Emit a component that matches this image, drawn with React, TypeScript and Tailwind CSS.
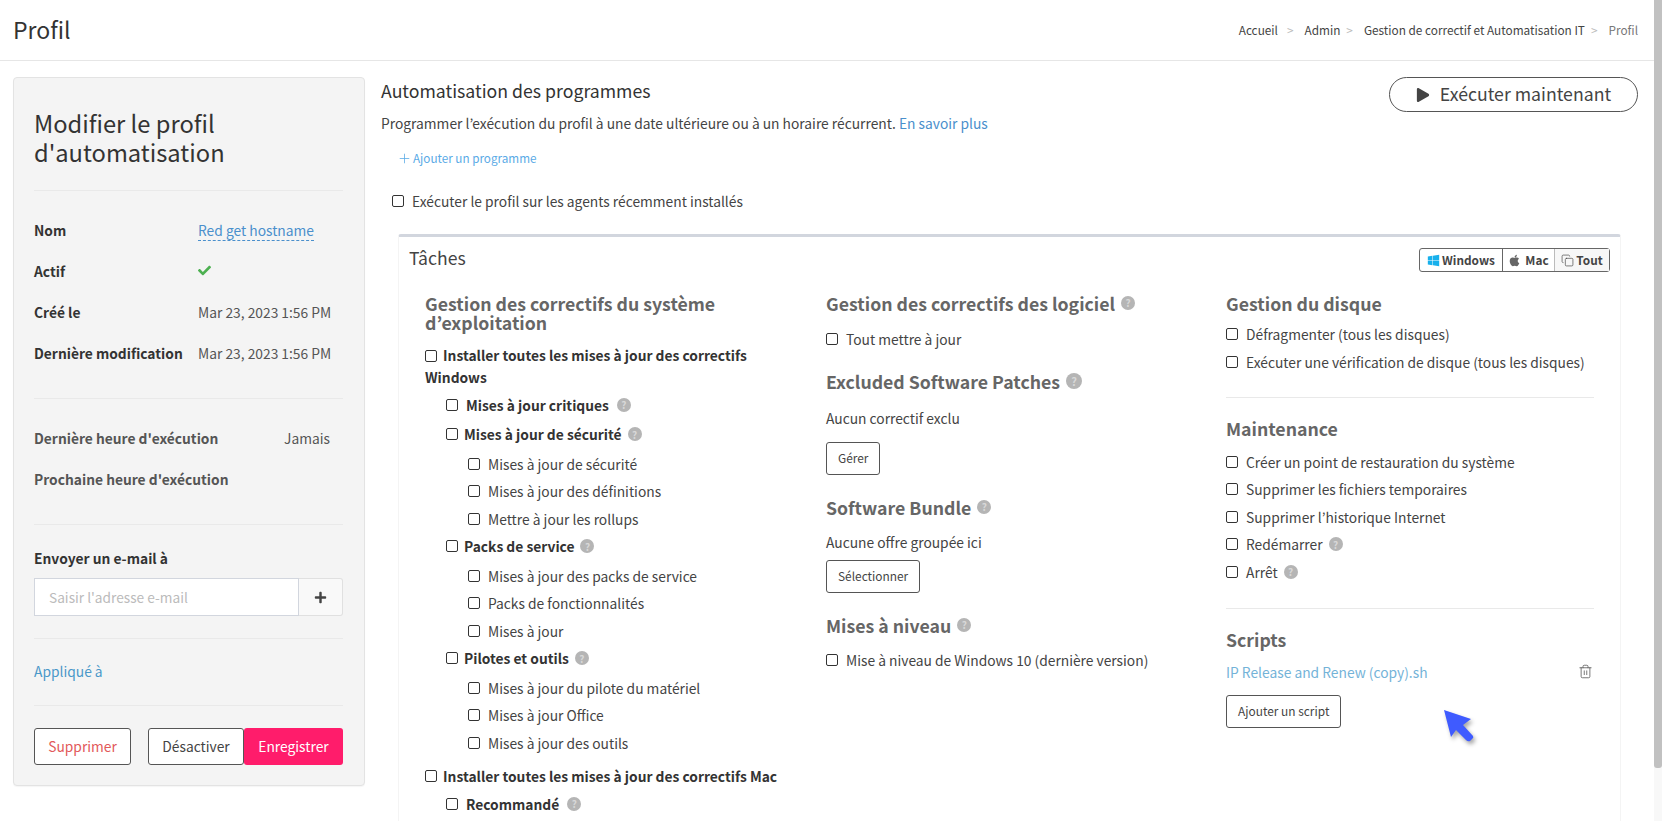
import { Copy, Plus, Trash2 } from 'lucide-react';
import { FaApple, FaCheck, FaPlay, FaPlus, FaWindows } from 'react-icons/fa';

function Help({ big, className = '' }: { big?: boolean; className?: string }) {
  return (
    <span
      className={`inline-flex shrink-0 items-center justify-center rounded-full bg-[#b5b5b5] font-bold text-[#d8d8d8] ${
        big ? 'h-[16px] w-[16px] text-[11px]' : 'h-[14px] w-[14px] text-[10px]'
      } ${className}`}
    >
      ?
    </span>
  );
}

function Box() {
  return <span className="inline-block h-[12px] w-[12px] shrink-0 rounded-[2px] border border-[#333] bg-white" />;
}

function Row({ label, bold, help, gap = 'gap-2', className = '' }: { label: string; bold?: boolean; help?: boolean; gap?: string; className?: string }) {
  return (
    <div className={`flex h-[27.5px] items-center ${gap} ${bold ? 'font-bold text-[#333]' : ''} ${className}`}>
      <Box />
      <span className="leading-5">{label}</span>
      {help ? <Help className={bold ? '' : '-ml-[2px]'} /> : null}
    </div>
  );
}

function Group({ label, items, gap }: { label: string; items: string[]; gap?: string }) {
  return (
    <div>
      <Row label={label} bold help gap={gap ?? 'gap-[6px]'} className="ml-[21px]" />
      <div className="mt-[2px] ml-[43px]">
        {items.map((item) => (
          <Row key={item} label={item} />
        ))}
      </div>
    </div>
  );
}

function Heading({ text, help, big, className = '' }: { text: string; help?: boolean; big?: boolean; className?: string }) {
  return (
    <h4 className={`flex h-5 items-center text-[17.7px] leading-5 font-bold text-[#666] ${className}`}>
      {text}
      {help ? <Help big={big} className="ml-[6px]" /> : null}
    </h4>
  );
}

function OutlineBtn({ label, className = '' }: { label: string; className?: string }) {
  return (
    <button type="button" className={`block h-[33px] rounded-[3px] border border-[#555] bg-white px-[11px] text-[11.9px] text-[#444] ${className}`}>
      {label}
    </button>
  );
}

function Info({ label, children, muted }: { label: string; children?: React.ReactNode; muted?: boolean }) {
  return (
    <div className={`flex h-[41px] items-center justify-between pr-[13px] leading-5 ${muted ? 'text-[#555]' : 'text-[#333]'}`}>
      <span className="font-bold">{label}</span>
      {children}
    </div>
  );
}

const HR = 'h-px bg-[#e9e9e9]';

export default function App() {
  return (
    <div className="flex h-[821px] overflow-hidden bg-white font-['Noto_Sans_CJK_JP','Liberation_Sans',sans-serif] text-[13.8px] text-[#444]">
      <div className="relative min-w-0 flex-1">
        <header className="flex h-[61px] items-center justify-between border-b border-[#e6e6e6] pr-4 pl-[13px]">
          <h1 className="pb-[2px] text-[23px] leading-8 text-[#333]">Profil</h1>
          <nav className="flex items-center text-[11.8px] leading-5 text-[#444]">
            <span>Accueil</span>
            <span className="mr-[11px] ml-[9px] text-[#bbb]">&gt;</span>
            <span>Admin</span>
            <span className="mr-[11px] ml-[6px] text-[#bbb]">&gt;</span>
            <span>Gestion de correctif et Automatisation IT</span>
            <span className="mr-[11px] ml-[6px] text-[#bbb]">&gt;</span>
            <span className="text-[#777]">Profil</span>
          </nav>
        </header>

        <div className="flex pt-4 pr-4 pl-[13px]">
          <aside className="h-[709px] w-[352px] shrink-0 rounded-[4px] border border-[#e3e3e3] bg-[#f4f4f4] pr-[21px] pl-5 shadow-[0_1px_1px_rgba(0,0,0,0.04)]">
            <h2 className="mt-[31px] text-[23.7px] leading-[29px] text-[#333]">
              Modifier le profil
              <br />
              d'automatisation
            </h2>
            <div className={`mt-[23px] mb-[18px] ${HR}`} />
            <Info label="Nom">
              <span className="w-[132px] whitespace-nowrap text-[#4a8fcc]">
                <span className="border-b border-dashed border-[#4a8fcc]">Red get hostname</span>
              </span>
            </Info>
            <Info label="Actif">
              <span className="w-[132px]">
                <FaCheck size={13} className="text-[#4cb050]" />
              </span>
            </Info>
            <Info label="Créé le">
              <span className="w-[132px] whitespace-nowrap text-[#555]">Mar 23, 2023 1:56 PM</span>
            </Info>
            <Info label="Dernière modification">
              <span className="w-[132px] whitespace-nowrap text-[#555]">Mar 23, 2023 1:56 PM</span>
            </Info>
            <div className={`mt-[25px] mb-[18px] ${HR}`} />
            <Info label="Dernière heure d'exécution" muted>
              <span>Jamais</span>
            </Info>
            <Info label="Prochaine heure d'exécution" muted />
            <div className={`mt-[25px] mb-[23px] ${HR}`} />
            <div className="h-5 leading-5 font-bold text-[#333]">Envoyer un e-mail à</div>
            <div className="mt-[10px] flex h-[38px]">
              <input
                readOnly
                placeholder="Saisir l'adresse e-mail"
                className="w-[265px] border border-[#d2d6de] bg-white px-[14px] text-[13.7px] outline-none placeholder:text-[#bbb]"
              />
              <span className="flex flex-1 items-center justify-center rounded-r-[3px] border border-l-0 border-[#e0e0e0] bg-[#f9f9f9]">
                <FaPlus size={13} className="text-[#444]" />
              </span>
            </div>
            <div className={`mt-[22px] mb-[22px] ${HR}`} />
            <a className="block h-5 leading-5 text-[#4a98c9]">Appliqué à</a>
            <div className={`mt-[24px] mb-[22px] ${HR}`} />
            <div className="flex h-[37px]">
              <button type="button" className="w-[97px] rounded-[3px] border border-[#555] bg-white text-[#e2595a]">
                Supprimer
              </button>
              <button type="button" className="ml-[17px] w-[96px] rounded-[3px] border border-[#555] bg-white text-[#444]">
                Désactiver
              </button>
              <button type="button" className="w-[99px] rounded-[3px] bg-[#ff1c6b] text-white">
                Enregistrer
              </button>
            </div>
          </aside>

          <section className="ml-4 min-w-0 flex-1">
            <div className="flex items-start justify-between">
              <div>
                <h3 className="mt-[1px] text-[17.7px] leading-6 text-[#333]">Automatisation des programmes</h3>
                <p className="mt-[11px] h-5 leading-5 text-[#444]">
                  Programmer l’exécution du profil à une date ultérieure ou à un horaire récurrent.{' '}
                  <a className="text-[#4a8fcc]">En savoir plus</a>
                </p>
              </div>
              <button
                type="button"
                className="flex h-[35px] w-[249px] items-center justify-center gap-[10px] rounded-full border border-[#555] bg-white pb-[2px] text-[17.7px] text-[#444]"
              >
                <FaPlay size={14} className="mt-[2px] text-[#444]" />
                Exécuter maintenant
              </button>
            </div>

            <a className="mt-4 ml-[16px] flex h-[18px] items-center gap-[1px] text-[11.7px] leading-[18px] text-[#5aaae6]">
              <Plus size={15} strokeWidth={1.25} />
              Ajouter un programme
            </a>

            <div className="mt-[24px] ml-[11px] flex h-5 items-center gap-2">
              <Box />
              Exécuter le profil sur les agents récemment installés
            </div>

            <div className="mt-[23px] mr-[17px] ml-[17px] h-[600px] rounded-t-[3px] border-x border-t-[3px] border-x-[#f4f4f4] border-t-[#d2d6de]">
              <div className="flex items-start justify-between pt-[9px] pr-[10px] pl-[10px]">
                <h3 className="h-6 text-[17.6px] leading-6 text-[#444]">Tâches</h3>
                <div className="mt-[2px] flex h-6 items-center rounded-[3px] border border-[#666] text-[11.8px] leading-none font-bold text-[#444]">
                  <span className="flex h-full w-[82px] items-center justify-center gap-[2px]">
                    <FaWindows size={13} className="text-[#17b0ec]" />
                    Windows
                  </span>
                  <span className="flex h-full w-[52px] items-center justify-center gap-[4px] border-l border-[#666]">
                    <FaApple size={13} className="text-[#666]" />
                    Mac
                  </span>
                  <span className="flex h-full w-[55px] items-center justify-center gap-[2px] border-l border-[#bbb] bg-[#f7f7f7]">
                    <Copy size={13} strokeWidth={1.25} />
                    Tout
                  </span>
                </div>
              </div>

              <div className="mt-[21px] grid grid-cols-[401px_400px_368px] pl-[26px]">
                <div className="pt-[1px]">
                  <h4 className="w-[340px] text-[17.7px] leading-[19px] font-bold text-[#666]">
                    Gestion des correctifs du système d’exploitation
                  </h4>
                  <div className="mt-[12px] w-[340px] leading-[22px] font-bold text-[#333]">
                    <span className="mr-[6px] inline-block translate-y-[1px]">
                      <Box />
                    </span>
                    Installer toutes les mises à jour des correctifs Windows
                  </div>
                  <div className="mt-[3px]">
                    <Row label="Mises à jour critiques" bold help className="mb-[2px] ml-[21px]" gap="gap-[8px]" />
                    <Group label="Mises à jour de sécurité" items={['Mises à jour de sécurité', 'Mises à jour des définitions', 'Mettre à jour les rollups']} />
                    <Group label="Packs de service" items={['Mises à jour des packs de service', 'Packs de fonctionnalités', 'Mises à jour']} />
                    <Group label="Pilotes et outils" items={['Mises à jour du pilote du matériel', 'Mises à jour Office', 'Mises à jour des outils']} />
                  </div>
                  <div className="mt-[6px]">
                    <Row label="Installer toutes les mises à jour des correctifs Mac" bold gap="gap-[6px]" />
                    <Row label="Recommandé" bold help className="ml-[21px]" gap="gap-[8px]" />
                  </div>
                </div>

                <div>
                  <Heading text="Gestion des correctifs des logiciel" help />
                  <Row label="Tout mettre à jour" className="mt-[12px]" />
                  <Heading text="Excluded Software Patches" help big className="mt-[18px]" />
                  <p className="mt-[17px] h-5 leading-5">Aucun correctif exclu</p>
                  <OutlineBtn label="Gérer" className="mt-[14px]" />
                  <Heading text="Software Bundle" help className="mt-[22px]" />
                  <p className="mt-[15px] h-5 leading-5">Aucune offre groupée ici</p>
                  <OutlineBtn label="Sélectionner" className="mt-[8px]" />
                  <Heading text="Mises à niveau" help className="mt-[22px]" />
                  <Row label="Mise à niveau de Windows 10 (dernière version)" className="mt-[12px]" />
                </div>

                <div>
                  <Heading text="Gestion du disque" />
                  <Row label="Défragmenter (tous les disques)" className="mt-[7px]" />
                  <Row label="Exécuter une vérification de disque (tous les disques)" className="mt-[1px]" />
                  <div className={`mt-[21px] ${HR}`} />
                  <Heading text="Maintenance" className="mt-[20px]" />
                  <div className="mt-[10px]">
                    <Row label="Créer un point de restauration du système" />
                    <Row label="Supprimer les fichiers temporaires" />
                    <Row label="Supprimer l’historique Internet" />
                    <Row label="Redémarrer" help />
                    <Row label="Arrêt" help />
                  </div>
                  <div className={`mt-[22px] ${HR}`} />
                  <Heading text="Scripts" className="mt-[20px]" />
                  <div className="mt-[13px] flex h-5 items-center justify-between pr-[1px] leading-5 text-[#74b3d8]">
                    IP Release and Renew (copy).sh
                    <Trash2 size={15} strokeWidth={1.25} className="text-[#555]" />
                  </div>
                  <OutlineBtn label="Ajouter un script" className="mt-[13px]" />
                </div>
              </div>
            </div>
          </section>
        </div>

        <svg viewBox="0 0 34 38" className="absolute top-[708px] left-[1442px] h-[38px] w-[34px] drop-shadow-[2px_3px_2px_rgba(0,0,0,0.35)]">
          <path d="M2 2 L29 11 L21 17 L31 28 Q32 30 30 31 L28 33 Q26 34 24 32 L14 22 L9 29 Z" fill="#3f5bff" />
        </svg>
      </div>

      <div className="flex w-2 shrink-0 flex-col bg-[#f8f8f8]">
        <div className="h-[768px] rounded-b-[3px] bg-[#c1c1c1]" />
      </div>
    </div>
  );
}
